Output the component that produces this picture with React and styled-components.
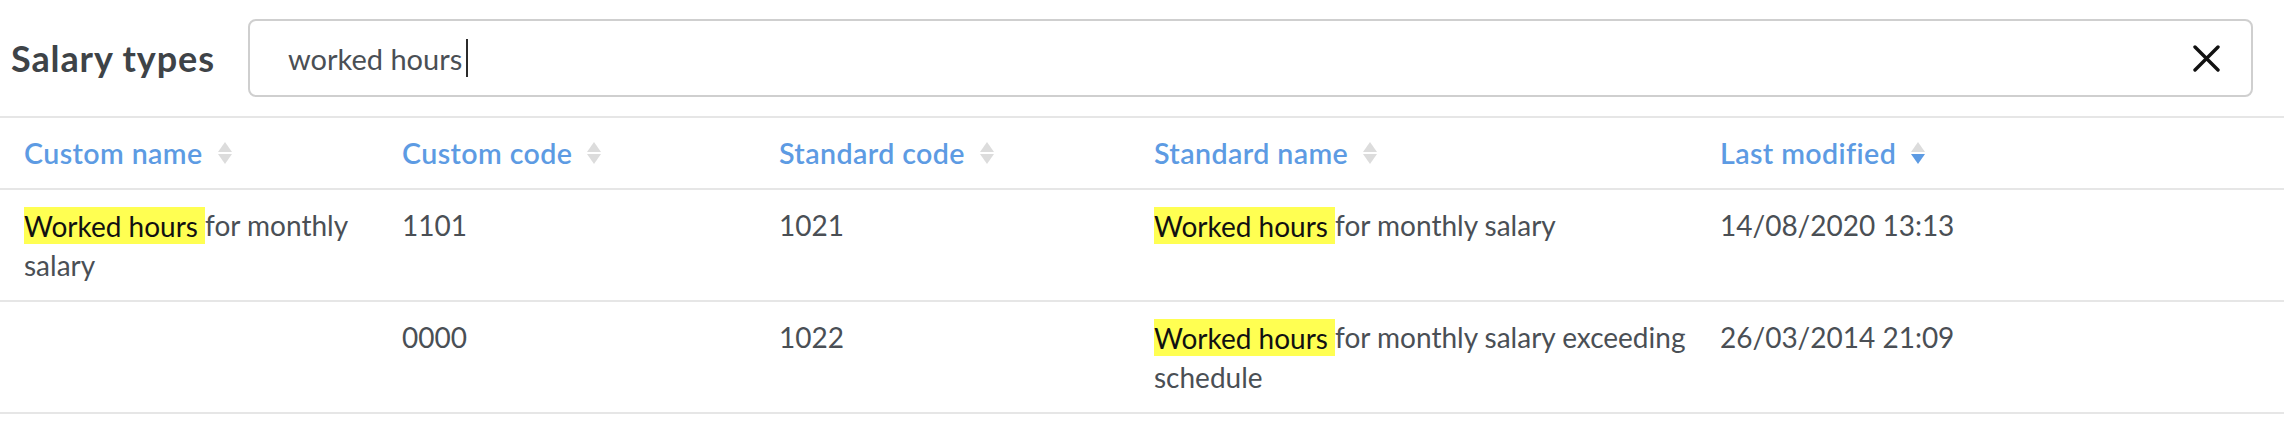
import React from "react";
import styled, { createGlobalStyle } from "styled-components";

const GlobalStyle = createGlobalStyle`
  body {
    margin: 0;
    background: #ffffff;
    font-family: "Lato", "Liberation Sans", sans-serif;
    color: #4a4f55;
  }
`;

const columns = [
  { key: "customName", label: "Custom name" },
  { key: "customCode", label: "Custom code" },
  { key: "standardCode", label: "Standard code" },
  { key: "standardName", label: "Standard name" },
  { key: "lastModified", label: "Last modified", sorted: "desc" },
];

const rows = [
  {
    id: 1,
    customName: { hit: "Worked hours", rest: "for monthly salary" },
    customCode: "1101",
    standardCode: "1021",
    standardName: { hit: "Worked hours", rest: "for monthly salary" },
    lastModified: "14/08/2020 13:13",
  },
  {
    id: 2,
    customName: null,
    customCode: "0000",
    standardCode: "1022",
    standardName: {
      hit: "Worked hours",
      rest: "for monthly salary exceeding schedule",
    },
    lastModified: "26/03/2014 21:09",
  },
];

const Page = styled.div`
  width: 100%;
`;

const TopBar = styled.div`
  display: flex;
  align-items: center;
  height: 116px;
  padding: 0 31px 0 11px;
  border-bottom: 2px solid #e6e6e6;
`;

const Title = styled.h1`
  flex: none;
  margin: 0 33px 0 0;
  font-size: 36px;
  font-weight: 700;
  letter-spacing: 0.9px;
  color: #3e4347;
  line-height: 40px;
`;

const SearchBox = styled.div`
  flex: 1;
  display: flex;
  align-items: center;
  height: 78px;
  box-sizing: border-box;
  padding: 0 31px 0 38px;
  border: 2px solid #cfcfcf;
  border-radius: 8px;
`;

const SearchText = styled.div`
  flex: 1;
  display: flex;
  align-items: center;
  font-size: 29px;
  color: #4a4f55;
`;

const Caret = styled.span`
  width: 2px;
  height: 38px;
  margin-left: 4px;
  background: #2b2b2b;
`;

const ClearButton = styled.button`
  display: flex;
  padding: 0;
  border: 0;
  background: none;
  cursor: pointer;
`;

const Grid = styled.div`
  display: grid;
  grid-template-columns: 378px 377px 375px 566px 1fr;
  border-bottom: 2px solid #e6e6e6;
`;

const HeadCell = styled.div`
  display: flex;
  align-items: center;
  gap: 15px;
  padding: 15px 0 15px 24px;
  line-height: 40px;
  font-size: 28.6px;
  font-weight: 600;
  letter-spacing: 0.4px;
  color: #5d9be3;
`;

const Cell = styled.div`
  padding: 15px 0 15px 24px;
  line-height: 40px;
  font-size: 28px;
  color: #4a4f55;
`;

const Mark = styled.mark`
  background: #ffff52;
  color: #111111;
  padding: 1.5px 0;
`;

const SortIcon = ({ dir }) => (
  <svg width="14" height="22" viewBox="0 0 14 22">
    <path d="M7 0 L14 10 L0 10 Z" fill={dir === "asc" ? "#5d9be3" : "#dcdcdc"} />
    <path d="M0 12 L14 12 L7 22 Z" fill={dir === "desc" ? "#5d9be3" : "#dcdcdc"} />
  </svg>
);

const CloseIcon = () => (
  <svg width="27" height="27" viewBox="0 0 27 27">
    <path
      d="M2 2 L25 25 M25 2 L2 25"
      stroke="#111111"
      strokeWidth="3.4"
      strokeLinecap="round"
    />
  </svg>
);

const Highlighted = ({ value }) =>
  value ? (
    <>
      <Mark>{value.hit} </Mark>
      {value.rest}
    </>
  ) : null;

const App = () => {
  return (
    <Page>
      <GlobalStyle />
      <TopBar>
        <Title>Salary types</Title>
        <SearchBox>
          <SearchText>
            worked hours
            <Caret />
          </SearchText>
          <ClearButton aria-label="Clear search">
            <CloseIcon />
          </ClearButton>
        </SearchBox>
      </TopBar>

      <Grid>
        {columns.map((col) => (
          <HeadCell key={col.key}>
            {col.label}
            <SortIcon dir={col.sorted} />
          </HeadCell>
        ))}
      </Grid>

      {rows.map((row) => (
        <Grid key={row.id}>
          <Cell>
            <Highlighted value={row.customName} />
          </Cell>
          <Cell>{row.customCode}</Cell>
          <Cell>{row.standardCode}</Cell>
          <Cell>
            <Highlighted value={row.standardName} />
          </Cell>
          <Cell>{row.lastModified}</Cell>
        </Grid>
      ))}
    </Page>
  );
};

export default App;
